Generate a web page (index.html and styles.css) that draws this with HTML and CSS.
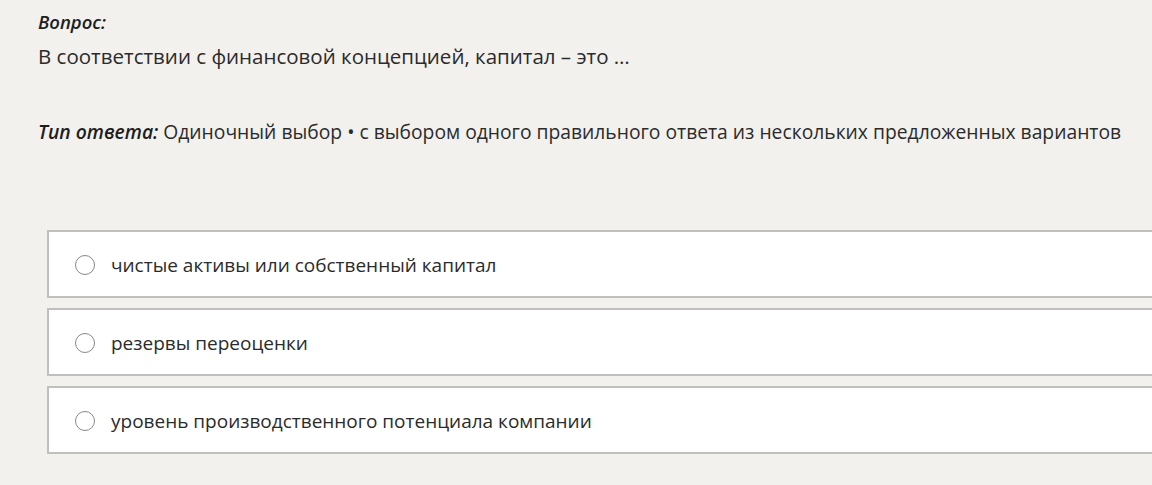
FILE: index.html
```html
<!DOCTYPE html>
<html lang="ru">
<head>
    <meta charset="UTF-8">
    <meta name="viewport" content="width=device-width, initial-scale=1.0">
    <title>Вопрос</title>
    <link rel="stylesheet" href="styles.css">
</head>
<body>

<div class="question">
    <!-- Question header -->
    <div class="label">Вопрос:</div>
    <div class="text">В соответствии с финансовой концепцией, капитал – это …</div>

    <!-- Answer type -->
    <div class="type"><span class="label">Тип ответа:</span> Одиночный выбор • с выбором одного правильного ответа из нескольких предложенных вариантов</div>

    <!-- Options -->
    <div class="options">
        <label class="option"><span class="radio"></span>чистые активы или собственный капитал</label>
        <label class="option"><span class="radio"></span>резервы переоценки</label>
        <label class="option"><span class="radio"></span>уровень производственного потенциала компании</label>
    </div>
</div>

</body>
</html>
```

FILE: styles.css
```css
body {
    margin: 0;
    background-color: #f2f1ed;
    font-family: "Open Sans", "Noto Sans", sans-serif;
    color: #2b2b2b;
    overflow: hidden;
}

.question {
    padding: 8px 0 0 38px;
    line-height: 28px;
}

.label {
    font-style: italic;
    font-weight: 600;
    font-size: 18.5px;
    color: #1e1e1e;
}

.text {
    font-size: 20.5px;
    margin-top: 6px;
}

.type {
    font-size: 19.3px;
    margin-top: 48px;
}

.type .label {
    font-size: 19.3px;
}

.options {
    margin: 84px -60px 0 9px;
}

.option {
    box-sizing: border-box;
    display: flex;
    align-items: center;
    height: 68px;
    margin-bottom: 10px;
    padding: 2px 0 0 26px;
    background-color: #fff;
    border: 2px solid #bfbfbd;
    font-size: 19px;
}

.radio {
    box-sizing: border-box;
    width: 20px;
    height: 20px;
    border: 1.5px solid #888;
    border-radius: 50%;
    margin-right: 16px;
}
```
